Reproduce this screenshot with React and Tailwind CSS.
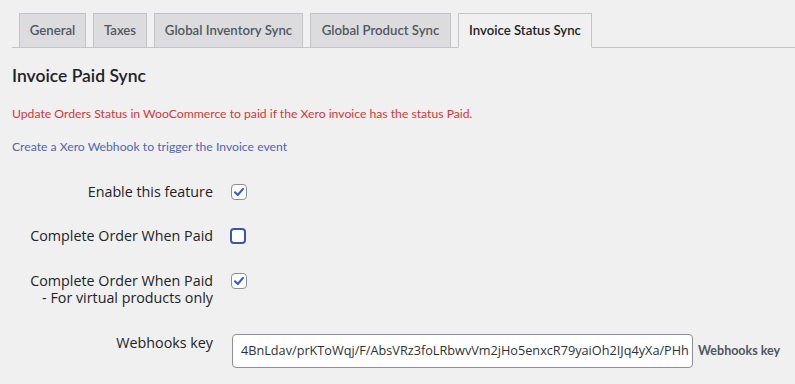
import React from "react";

const Check = ({ checked, focused }) => (
  <span
    className={
      "flex items-center justify-center w-4 h-4 rounded-[4px] bg-white " +
      (focused ? "border-2 border-[#3858a6]" : "border border-[#8c8f94]")
    }
  >
    {checked && (
      <svg width="14" height="14" viewBox="0 0 14 14">
        <path d="M3 7.2 L5.8 10 L11 3.8" fill="none" stroke="#3858c9" strokeWidth="2" strokeLinecap="round" strokeLinejoin="round" />
      </svg>
    )}
  </span>
);

export default function App() {
  const tabs = [
    { t: "General", w: "w-[67px]" },
    { t: "Taxes", w: "w-[54px]" },
    { t: "Global Inventory Sync", w: "w-[149px]" },
    { t: "Global Product Sync", w: "w-[141px]" },
    { t: "Invoice Status Sync", w: "w-[134px]" },
  ];
  return (
    <div className="w-[795px] h-[384px] bg-[#f0f0f1] overflow-hidden" style={{ fontFamily: "'Open Sans', sans-serif" }}>
      <div className="pt-[13px] ml-[12px] flex gap-[7px] pl-[7px] border-b border-[#c3c4c7]" style={{ fontFamily: "Lato, sans-serif" }}>
        {tabs.map(({ t, w }, i) => {
          const active = i === 4;
          return (
            <div
              key={t}
              className={
                w +
                " h-[35px] flex items-center justify-center whitespace-nowrap text-[13.2px] font-semibold border border-[#c3c4c7] -mb-px " +
                (active ? "bg-[#f0f0f1] text-[#1d2327] border-b-[#f0f0f1]" : "bg-[#dcdcde] text-[#50575e]")
              }
            >
              {t}
            </div>
          );
        })}
      </div>
      <div className="px-[12px]">
        <h2 className="mt-[16px] text-[17.5px] font-semibold text-[#1d2327] leading-[24px]" style={{ fontFamily: "Lato, sans-serif" }}>Invoice Paid Sync</h2>
        <p className="mt-[17px] text-[12.2px] text-[#d63638] leading-[18px]" style={{ fontFamily: "Lato, sans-serif" }}>
          Update Orders Status in WooCommerce to paid if the Xero invoice has the status Paid.
        </p>
        <p className="mt-[15px] text-[12.2px] text-[#4f67ad] leading-[18px]" style={{ fontFamily: "Lato, sans-serif" }}>
          Create a Xero Webhook to trigger the Invoice event
        </p>
      </div>
      <div className="mt-[26px] text-[14.3px] text-[#1d2327]">
        <div className="flex items-center h-[20px]">
          <div className="w-[213px] text-right leading-[20px]">Enable this feature</div>
          <div className="ml-[18px]"><Check checked /></div>
        </div>
        <div className="flex items-center h-[20px] mt-[24px]">
          <div className="w-[213px] text-right leading-[20px]">Complete Order When Paid</div>
          <div className="ml-[17px]"><Check focused /></div>
        </div>
        <div className="flex items-start mt-[26px]">
          <div className="w-[213px] text-right leading-[17px]">
            Complete Order When Paid
            <br />- For virtual products only
          </div>
          <div className="ml-[18px] mt-[1px]"><Check checked /></div>
        </div>
        <div className="flex items-start mt-[27px]">
          <div className="w-[213px] text-right leading-[20px]">Webhooks key</div>
          <div className="ml-[19px] mt-[1px] w-[461px] h-[34px] bg-white border border-[#8c8f94] rounded-[4px] px-[8px] flex items-center overflow-hidden whitespace-nowrap text-[12.7px] text-[#2c3338]">
            4BnLdav/prKToWqj/F/AbsVRz3foLRbwvVm2jHo5enxcR79yaiOh2IJq4yXa/PHh
          </div>
          <div className="ml-[5px] mt-[9px] text-[12.5px] font-bold text-[#50575e] whitespace-nowrap" style={{ fontFamily: "Lato, sans-serif" }}>Webhooks key</div>
        </div>
      </div>
    </div>
  );
}
